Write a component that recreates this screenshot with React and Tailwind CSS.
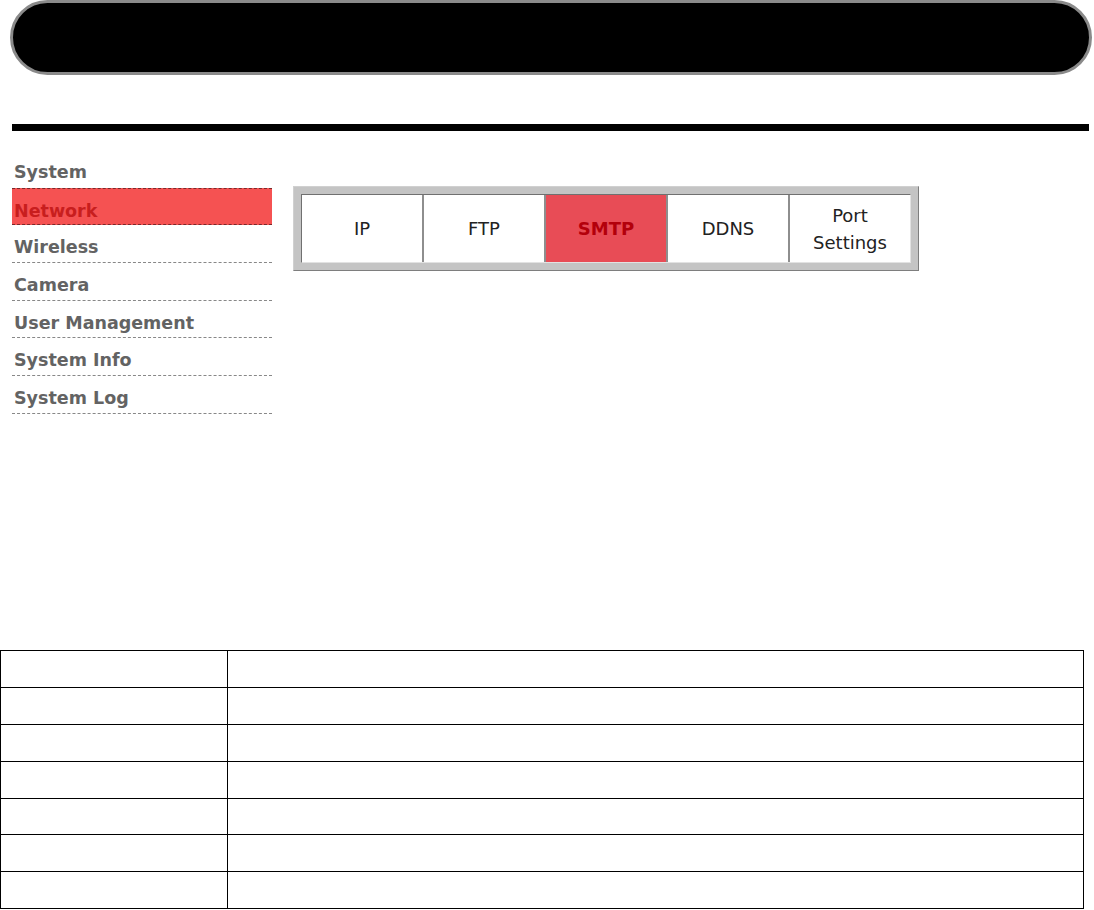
import React from "react";

const menu = ["System", "Network", "Wireless", "Camera", "User Management", "System Info", "System Log"];
const tabs = [
  { label: "IP" },
  { label: "FTP" },
  { label: "SMTP", active: true },
  { label: "DDNS" },
  { label: "Port Settings", two: true },
];

export default function App() {
  return (
    <div className="w-[1094px] h-[910px] bg-white overflow-hidden relative" style={{ fontFamily: '"DejaVu Sans", Verdana, sans-serif' }}>
      <div className="ml-[10px] w-[1082px] h-[75px] rounded-full bg-black border-[3px] border-[#8a8a8a]" />
      <div className="ml-[12px] mt-[49px] w-[1077px] h-[7px] bg-black" />
      <div className="flex mt-[19px]">
        <div className="ml-[12px] w-[260px] flex flex-col">
          {menu.map((m, i) => {
            const active = m === "Network";
            return (
              <div
                key={m}
                className={
                  "h-[37.7px] pl-[2px] pt-[12px] text-[17.5px] leading-[20px] font-bold " +
                  (active
                    ? "bg-[#f55252] text-[#c81e1e] border-y border-dashed border-[#7a2a2a]"
                    : i === 0
                    ? "text-[#636363]"
                    : "text-[#636363] border-b border-dashed border-[#888888]")
                }
              >
                {m}
              </div>
            );
          })}
        </div>
        <div className="ml-[21px] mt-[36px]">
          <div className="w-[626px] h-[85px] border border-t-[#d0d0d0] border-l-[#d0d0d0] border-r-[#7e7e7e] border-b-[#7e7e7e] bg-[#c4c4c4] p-[7px]">
            <div className="w-full h-full border border-t-[#707070] border-l-[#707070] border-r-[#e2e2e2] border-b-[#e2e2e2] bg-white flex">
              {tabs.map((t, i) => (
                <div
                  key={t.label}
                  className={
                    "flex-1 flex items-center justify-center text-center text-[18px] leading-[27px] " +
                    (i > 0 ? "border-l-2 border-[#8e8e8e] " : "") +
                    (t.active ? "bg-[#e84c56] text-[#b3000b] font-bold border-l-0" : "text-[#222222]")
                  }
                >
                  {t.two ? (
                    <span>
                      Port
                      <br />
                      Settings
                    </span>
                  ) : (
                    t.label
                  )}
                </div>
              ))}
            </div>
          </div>
        </div>
      </div>
      <table className="absolute left-0 top-[650px] w-[1084px] border-collapse">
        <tbody>
          {Array.from({ length: 7 }).map((_, i) => (
            <tr key={i} className="h-[36.9px]">
              <td className="w-[227px] border-[1.5px] border-black"></td>
              <td className="border-[1.5px] border-black"></td>
            </tr>
          ))}
        </tbody>
      </table>
    </div>
  );
}
